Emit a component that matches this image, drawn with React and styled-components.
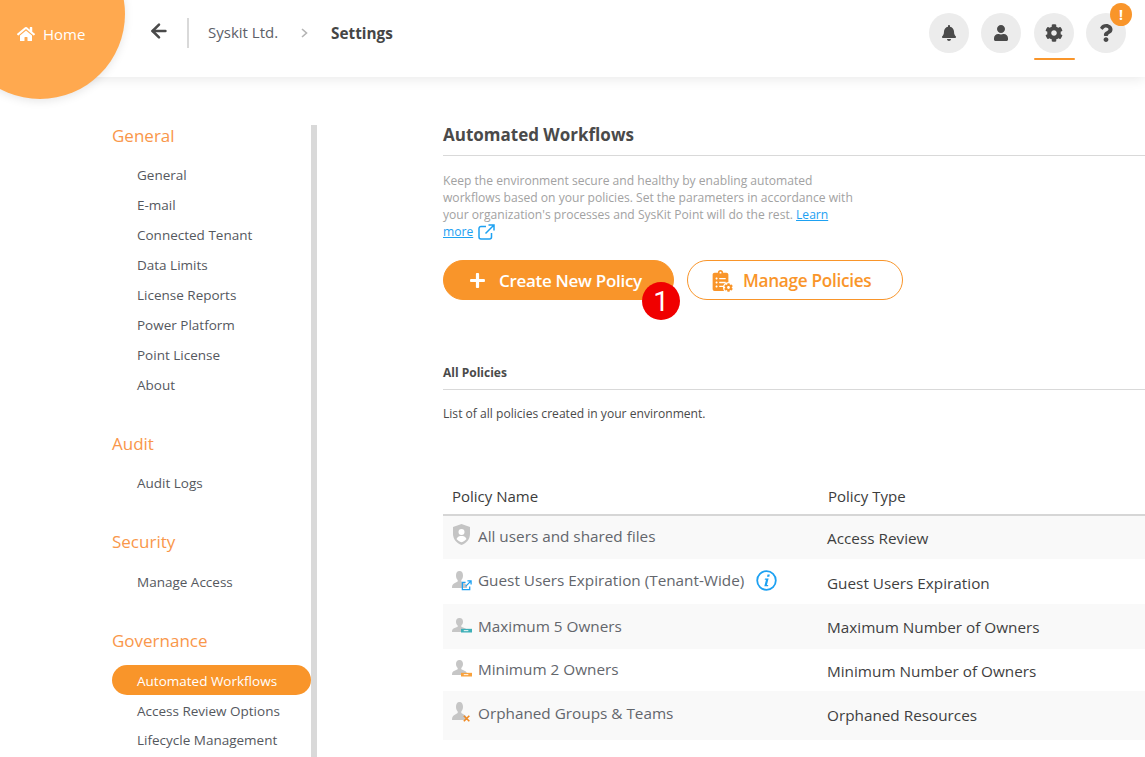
import React from "react";
import styled, { createGlobalStyle } from "styled-components";
import { FaHome, FaBell, FaUser, FaCog, FaQuestion, FaPlus, FaClipboardList } from "react-icons/fa";
import { ArrowLeft } from "lucide-react";

const Global = createGlobalStyle`
  html, body { margin: 0; padding: 0; background: #fff; }
  body { font-family: "Open Sans", "Noto Sans", sans-serif; color: #4a4a4a; }
  * { box-sizing: border-box; }
`;
const Page = styled.div`
  width: 1145px; height: 757px; overflow: hidden; position: relative; background: #fff;
`;
const Header = styled.header`
  height: 77px; display: flex; align-items: center; padding: 0 19px 12px 151px;
  box-shadow: 0 2px 12px rgba(0,0,0,.09); background: #fff; position: relative;
`;
const HomeBlob = styled.div`
  position: absolute; left: -45px; top: -71px; width: 170px; height: 170px; border-radius: 50%;
  background: #ffa94f; box-shadow: 0 2px 10px rgba(0,0,0,.1);
`;
const HomeLink = styled.a`
  position: absolute; left: 62px; top: 95px; display: flex; align-items: center; gap: 8px;
  color: #fff; font-size: 15px; line-height: 20px;
  svg { font-size: 18px; }
`;
const Back = styled.div`
  display: flex; color: #4a4a4a; width: 38px; height: 30px; align-items: center; padding-bottom: 3px;
  border-right: 2px solid #d9d9d9;
  svg { margin-left: -3px; }
`;
const Crumb = styled.span`
  font-size: 15px; color: #5c6068; margin-left: 19px; margin-bottom: 1px;
`;
const Chevron = styled.svg`
  width: 7px; height: 10px; margin-left: 23px; fill: none; stroke: #b4b4b4; stroke-width: 1.6;
`;
const Current = styled.span`
  font-weight: 700; font-size: 15.3px; color: #454545; margin-left: 23px;
`;
const Tools = styled.div`
  margin-left: auto; display: flex; gap: 12px; position: relative;
`;
const Tool = styled.div`
  width: 40px; height: 40px; border-radius: 50%; background: #ececec; display: flex;
  align-items: center; justify-content: center; color: #4a4a4a; font-size: ${p => p.$size || 16}px;
  position: relative;
  &:nth-child(3) { margin-left: 1px; }
`;
const Underline = styled.span`
  position: absolute; left: 0; right: -1px; bottom: -7px; height: 2px; background: #f9952a; border-radius: 1px;
`;
const Alert = styled.span`
  position: absolute; right: -6px; top: -10px; width: 22px; height: 23px; border-radius: 50%;
  background: #f9952a; color: #fff; font-size: 14px; font-weight: 700; display: flex; align-items: center; justify-content: center;
`;
const Body = styled.div`
  display: flex; align-items: flex-start;
`;
const Sidebar = styled.aside`
  width: 317px; padding-left: 112px; border-right: 6px solid #d9d9d9;
  margin-top: 48px; height: 640px; flex: none;
`;
const Section = styled.section`
  margin-bottom: 32px;
  &:first-child { margin-top: -1px; }
`;
const SectionTitle = styled.h3`
  margin: 0 0 ${p => p.$gap || 12}px; font-weight: 400; font-size: 17px; line-height: 24px; color: #f9974a;
`;
const NavItem = styled.div`
  height: 30px; line-height: ${p => p.$lh || 30}px; padding-left: 25px; font-size: 13.5px; border-radius: 15px;
  color: ${p => p.$active ? "#fff" : "#55585e"}; background: ${p => p.$active ? "#f9952a" : "transparent"};
`;
const Main = styled.main`
  margin-left: 126px; flex: 1; padding-top: 44px; min-width: 0;
`;
const Title = styled.h2`
  margin: 0; height: 35px; font-size: 17px; line-height: 28px; font-weight: 700; color: #4a4a4a;
  border-bottom: 1px solid #d9d9d9;
`;
const Lead = styled.p`
  margin: 16px 0 0; width: 415px; font-size: 12.1px; line-height: 17px; color: #a2a2a2;
`;
const LearnMore = styled.a`
  color: #1da1f2; text-decoration: underline;
`;
const ExtIcon = styled.svg`
  width: 17px; height: 16px; vertical-align: -4px; margin-left: 5px; fill: none; stroke: #1da1f2; stroke-width: 1.5;
`;
const Buttons = styled.div`
  display: flex; gap: 13px; margin-top: 20px; position: relative;
`;
const Btn = styled.button`
  height: 40px; width: ${p => p.$w}px; border-radius: 20px; border: 1px solid #f9952a; display: flex; align-items: center;
  padding: 0 0 0 ${p => p.$pad}px; gap: ${p => p.$gap}px; font-family: inherit; font-weight: 600; font-size: ${p => p.$fs || 17}px; letter-spacing: -.3px;
  background: ${p => p.$filled ? "#f9952a" : "#fff"}; color: ${p => p.$filled ? "#fff" : "#f9952a"};
`;
const BtnIcon = styled.span`
  position: relative; display: flex; font-size: ${p => p.$size}px;
`;
const Gear = styled.span`
  position: absolute; right: -3px; bottom: -2px; display: flex; font-size: 9px; background: #fff; border-radius: 50%; padding: 1px;
`;
const Step = styled.span`
  position: absolute; left: 199px; top: 22px; width: 38px; height: 38px; border-radius: 50%; background: #f00000;
  color: #fff; font-family: Roboto, sans-serif; font-size: 28px; display: flex; align-items: center; justify-content: center;
`;
const SubTitle = styled.h4`
  margin: 64px 0 0; height: 26px; line-height: 18px; font-size: 12px; font-weight: 700; color: #4a4a4a; border-bottom: 1px solid #d9d9d9;
`;
const Note = styled.p`
  margin: 15px 0 0; font-size: 12.1px; line-height: 17px; color: #4a4a4a;
`;
const TableHead = styled.div`
  display: grid; grid-template-columns: 376px 1fr; margin-top: 52px; height: 42px; border-bottom: 2px solid #d6d6d6;
  font-size: 15px; line-height: 22px; color: #3c3c3c; padding: 11px 0 0 9px;
`;
const Row = styled.div`
  display: grid; grid-template-columns: 384px 1fr; height: ${p => p.$h}px; background: ${p => p.$shade ? "#f9f9f9" : "#fff"};
`;
const NameCell = styled.div`
  display: flex; align-items: flex-start; padding: ${p => p.$top}px 0 0 8px; font-size: 15.3px; line-height: 22px; color: #63666c;
`;
const TypeCell = styled.div`
  font-size: 15.3px; line-height: 22px; color: #3f3f3f; padding-top: ${p => p.$top}px;
`;
const IconSlot = styled.span`
  width: 27px; height: 22px; flex: none; position: relative; display: block;
`;
const Person = styled.svg`
  position: absolute; left: 1px; top: ${p => p.$top}px; height: ${p => p.$h}px; width: 15px; fill: #c6c6c6;
`;
const Mini = styled.svg`
  position: absolute; left: ${p => p.$left || 10}px; top: ${p => p.$top}px; width: 11px; height: 11px;
`;
const Info = styled.svg`
  width: 21px; height: 21px; margin: 1px 0 0 12px;
`;
const Shield = styled.svg`
  width: 19px; height: 21px; display: block; margin: -1px 0 0 1px;
`;

const general = ["General","E-mail","Connected Tenant","Data Limits","License Reports","Power Platform","Point License","About"];

const PersonIcon = ({ top, h, badgeTop, badgeLeft, children }) => (
  <IconSlot>
    <Person $top={top} $h={h} viewBox="0 0 15 17" preserveAspectRatio="none">
      <path d="M7.500 0C10 0 11 2 11 4.500c0 2-.7 3.500-1.700 4.500v1.500L13 12.500c1.300.8 2 1.800 2 4.500H0c0-2.700.7-3.700 2-4.500l3.700-2V9C4.700 8 4 6.500 4 4.500 4 2 5 0 7.500 0z" />
    </Person>
    <Mini viewBox="0 0 12 12" fill="none" $top={badgeTop} $left={badgeLeft}>{children}</Mini>
  </IconSlot>
);

export default function App() {
  return (
    <Page>
      <Global />
      <Header>
        <Back><ArrowLeft size={22} strokeWidth={2.8} /></Back>
        <Crumb>Syskit Ltd.</Crumb>
        <Chevron viewBox="0 0 7 10"><path d="M1 1l4.500 4L1 9" /></Chevron>
        <Current>Settings</Current>
        <Tools>
          <Tool><FaBell /></Tool>
          <Tool><FaUser /></Tool>
          <Tool $size={18}><FaCog /><Underline /></Tool>
          <Tool $size={18}><FaQuestion /><Alert>!</Alert></Tool>
        </Tools>
      </Header>
      <HomeBlob>
        <HomeLink><FaHome />Home</HomeLink>
      </HomeBlob>
      <Body>
        <Sidebar>
          <Section>
            <SectionTitle>General</SectionTitle>
            {general.map(g => <NavItem key={g}>{g}</NavItem>)}
          </Section>
          <Section>
            <SectionTitle>Audit</SectionTitle>
            <NavItem>Audit Logs</NavItem>
          </Section>
          <Section>
            <SectionTitle $gap={13}>Security</SectionTitle>
            <NavItem>Manage Access</NavItem>
          </Section>
          <Section>
            <SectionTitle>Governance</SectionTitle>
            <NavItem $active $lh={32}>Automated Workflows</NavItem>
            <NavItem $lh={32}>Access Review Options</NavItem>
            <NavItem>Lifecycle Management</NavItem>
          </Section>
        </Sidebar>
        <Main>
          <Title>Automated Workflows</Title>
          <Lead>
            Keep the environment secure and healthy by enabling automated workflows based on your policies. Set the parameters in accordance with your organization's processes and SysKit Point will do the rest. <LearnMore>Learn more</LearnMore>
            <ExtIcon viewBox="0 0 17 16"><path d="M8 2.500H3a2 2 0 0 0-2 2v8.500a2 2 0 0 0 2 2h8.500a2 2 0 0 0 2-2V9M10.500 1H16v5.500M16 1 7.500 9.500" /></ExtIcon>
          </Lead>
          <Buttons>
            <Btn $filled $w={231} $pad={25} $gap={13}><BtnIcon $size={17}><FaPlus /></BtnIcon>Create New Policy</Btn>
            <Btn $w={216} $pad={22} $gap={12} $fs={17.2}>
              <BtnIcon $size={21}><FaClipboardList /><Gear><FaCog /></Gear></BtnIcon>Manage Policies
            </Btn>
            <Step>1</Step>
          </Buttons>
          <SubTitle>All Policies</SubTitle>
          <Note>List of all policies created in your environment.</Note>
          <TableHead><span>Policy Name</span><span>Policy Type</span></TableHead>
          <Row $shade $h={43}>
            <NameCell $top={9}>
              <IconSlot>
                <Shield viewBox="0 0 19 21">
                  <path d="M9.500 0 18 3v7c0 5-3.500 9-8.500 11C4.500 19 1 15 1 10V3z" fill="#c4c4c4" />
                  <circle cx="9.500" cy="8" r="3" fill="#fff" />
                  <path d="M4.500 15c1-2.500 3-3 5-3s4 .5 5 3c-1.300 1.500-3 2.500-5 3.300-2-.8-3.700-1.800-5-3.300z" fill="#fff" />
                </Shield>
              </IconSlot>
              All users and shared files
            </NameCell>
            <TypeCell $top={11}>Access Review</TypeCell>
          </Row>
          <Row $h={45}>
            <NameCell $top={10}>
              <PersonIcon top={2} h={17} badgeTop={11}>
                <path d="M5 2.500H1.500v8h8V7M7 1h4v4M11 1 5 7" stroke="#1da1f2" strokeWidth="1.400" />
              </PersonIcon>
              Guest Users Expiration (Tenant-Wide)
              <Info viewBox="0 0 21 21">
                <circle cx="10.500" cy="10.500" r="9.300" fill="none" stroke="#1da1f2" strokeWidth="1.800" />
                <path d="M11.500 4.500h2.300l-.5 2.200h-2.300zM9 8.500h3.600l-1.700 6.400h1.400l-.3 1.300H8.300l1.700-6.400H8.700z" fill="#1da1f2" />
              </Info>
            </NameCell>
            <TypeCell $top={13}>Guest Users Expiration</TypeCell>
          </Row>
          <Row $shade $h={45}>
            <NameCell $top={11}>
              <PersonIcon top={3} h={14} badgeTop={12}>
                <rect x="0" y="2" width="12" height="4" fill="#3fb0b8" /><rect x="3" y="3.500" width="5" height="1" fill="#fff" />
              </PersonIcon>
              Maximum 5 Owners
            </NameCell>
            <TypeCell $top={12}>Maximum Number of Owners</TypeCell>
          </Row>
          <Row $h={42}>
            <NameCell $top={9}>
              <PersonIcon top={2} h={15} badgeTop={13}>
                <rect x="0" y="2" width="12" height="4" fill="#f9a23c" /><rect x="3" y="3.500" width="5" height="1" fill="#fff" />
              </PersonIcon>
              Minimum 2 Owners
            </NameCell>
            <TypeCell $top={11}>Minimum Number of Owners</TypeCell>
          </Row>
          <Row $shade $h={49}>
            <NameCell $top={11}>
              <PersonIcon top={0} h={18} badgeTop={11} badgeLeft={11}>
                <path d="M2 3l6 6M8 3l-6 6" stroke="#f08a24" strokeWidth="1.800" />
              </PersonIcon>
              Orphaned Groups &amp; Teams
            </NameCell>
            <TypeCell $top={13}>Orphaned Resources</TypeCell>
          </Row>
        </Main>
      </Body>
    </Page>
  );
}
